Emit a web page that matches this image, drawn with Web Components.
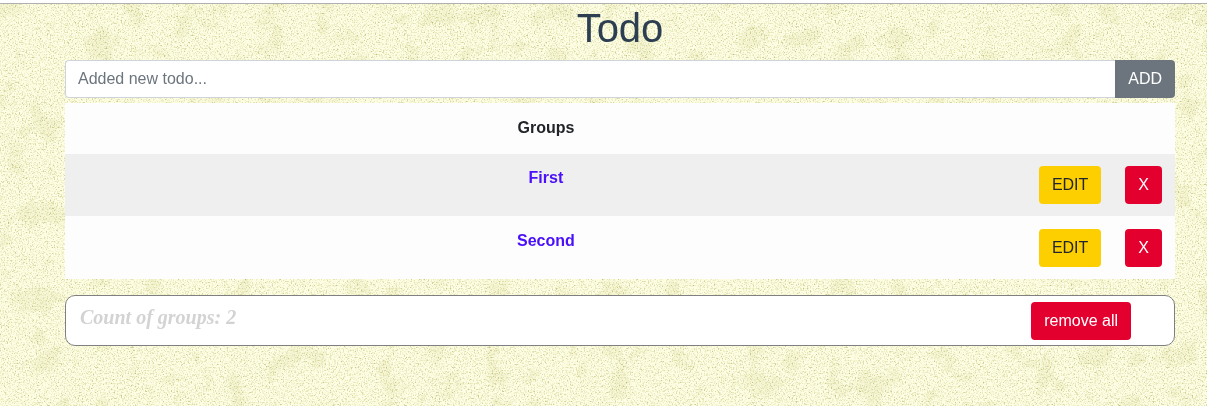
<!DOCTYPE html>
<html lang="en">
<head>
<meta charset="utf-8">
<title>Todo</title>
<style>
  html, body { margin: 0; }
  body {
    min-height: 100vh;
    background: #fefee3;
    color: #212529;
    font: 16px/24px "Liberation Sans", Arial, sans-serif;
  }
</style>
</head>
<body>
<todo-app></todo-app>

<script>
const define = (name, html, setup) => {
  const template = document.createElement('template');
  template.innerHTML = html;
  customElements.define(name, class extends HTMLElement {
    constructor() {
      super();
      this.attachShadow({ mode: 'open' }).append(template.content.cloneNode(true));
    }
    connectedCallback() { if (setup) setup(this, this.shadowRoot); }
  });
};

/* Speckled paper behind the page */
define('paper-backdrop', `
  <style>
    :host { display: block; position: fixed; inset: 0; z-index: -1; }
    svg { display: block; width: 100%; height: 100%; }
  </style>
  <svg aria-hidden="true">
    <filter id="grain" x="0" y="0" width="100%" height="100%" color-interpolation-filters="sRGB">
      <feTurbulence type="fractalNoise" baseFrequency="0.717 0.683" numOctaves="4" seed="4"/>
      <feColorMatrix values="0.7 0.7 0 0 -0.2  0.7 0.7 0 0 -0.2  0.7 0.7 0 0 -0.2  0 0 0 0 1"/>
      <feComponentTransfer result="specks">
        <feFuncR type="table" tableValues="0.76 0.78 0.82 0.89 0.94 0.985 1 1 1 1 1"/>
        <feFuncG type="table" tableValues="0.76 0.78 0.82 0.89 0.94 0.985 1 1 1 1 1"/>
        <feFuncB type="table" tableValues="0.5 0.52 0.6 0.7 0.79 0.87 0.91 0.91 0.91 0.91 0.91"/>
      </feComponentTransfer>
      <feTurbulence type="fractalNoise" baseFrequency="0.035" numOctaves="4" seed="9"/>
      <feColorMatrix values="1 0 0 0 0  1 0 0 0 0  1 0 0 0 0  0 0 0 0 1"/>
      <feComponentTransfer result="patches">
        <feFuncR type="table" tableValues="0.97 0.97 0.97 0.975 1 1 1 1 1 1"/>
        <feFuncG type="table" tableValues="0.97 0.97 0.97 0.975 1 1 1 1 1 1"/>
        <feFuncB type="table" tableValues="0.93 0.93 0.93 0.94 1 1 1 1 1 1"/>
      </feComponentTransfer>
      <feBlend in="specks" in2="patches" mode="multiply"/>
    </filter>
    <rect width="100%" height="100%" filter="url(#grain)"/>
  </svg>`);

define('action-button', `
  <style>
    :host { display: inline-block; }
    button {
      display: block; margin: 0; padding: 6px 12px;
      border: 1px solid transparent; border-radius: 4px;
      font: inherit; color: #fff; white-space: nowrap; cursor: pointer;
      background: #e4002e; background-clip: border-box;
    }
    :host([kind=warning]) button { background: #fdcf00; color: #212529; }
    :host([kind=secondary]) button { background: #6c757d; border-radius: 0 4px 4px 0; }
  </style>
  <button type="button"><slot></slot></button>`);

define('todo-form', `
  <style>
    :host { display: block; }
    form { display: flex; margin: 0; }
    input {
      flex: 1; min-width: 0; box-sizing: border-box; margin: 0;
      padding: 6px 12px; font: inherit; color: #495057; background: #fff;
      border: 1px solid #ced4da; border-right: 0; border-radius: 4px 0 0 4px;
    }
    input::placeholder { color: #6c757d; opacity: 1; }
  </style>
  <form>
    <input type="text" placeholder="Added new todo..." aria-label="Added new todo">
    <action-button kind="secondary">ADD</action-button>
  </form>`);

define('group-table', `
  <style>
    :host { display: block; }
    table { width: 100%; border-collapse: separate; border-spacing: 0; background: #fdfdfd; }
    th, td { padding: 12px; text-align: center; vertical-align: top; font-weight: bold; }
    thead th { padding: 13px 12px 14px; }
    .name { width: 100%; }
    td { font-weight: normal; }
    td:last-child { padding-right: 13px; }
    tbody tr:nth-child(odd) > * { background: #efefef; }
    tbody tr + tr > * { border-top: 1px solid #fdfdfd; }
    a { color: #4b10fb; text-decoration: none; }
    action-button { display: block; }
  </style>
  <table>
    <thead><tr><th class="name" scope="col">Groups</th><th></th><th></th></tr></thead>
    <tbody></tbody>
  </table>`, (host, root) => {
  const body = root.querySelector('tbody');
  body.replaceChildren();
  for (const name of host.getAttribute('groups').split(',')) {
    const row = body.insertRow();
    row.innerHTML = `<th scope="row"><a href="#"></a></th>
      <td><action-button kind="warning">EDIT</action-button></td>
      <td><action-button>X</action-button></td>`;
    row.querySelector('a').textContent = name;
  }
});

define('group-summary', `
  <style>
    :host {
      display: flex; justify-content: space-between; align-items: flex-start;
      padding: 6px 43px 5px 14px; background: #fff;
      border: 1px solid #808080; border-radius: 10px;
    }
    p {
      margin: 3px 0 0; color: #d3d3d3;
      font: italic bold 20px/24px "Liberation Serif", "Times New Roman", serif;
    }
  </style>
  <p><slot></slot></p>
  <action-button>remove all</action-button>`);

define('todo-app', `
  <style>
    :host { display: block; }
    header { height: 3px; background: #fff; border-bottom: 1px solid #b0b0b0; }
    main { padding: 0 32px 60px 65px; }
    h1 { margin: 0 0 8px; font-size: 40px; line-height: 48px; font-weight: normal; text-align: center; color: #2c3e50; }
    group-table { margin: 5px 0 16px; }
  </style>
  <paper-backdrop></paper-backdrop>
  <header></header>
  <main>
    <h1>Todo</h1>
    <todo-form></todo-form>
    <group-table groups="First,Second"></group-table>
    <group-summary>Count of groups: 2</group-summary>
  </main>`);
</script>
</body>
</html>
